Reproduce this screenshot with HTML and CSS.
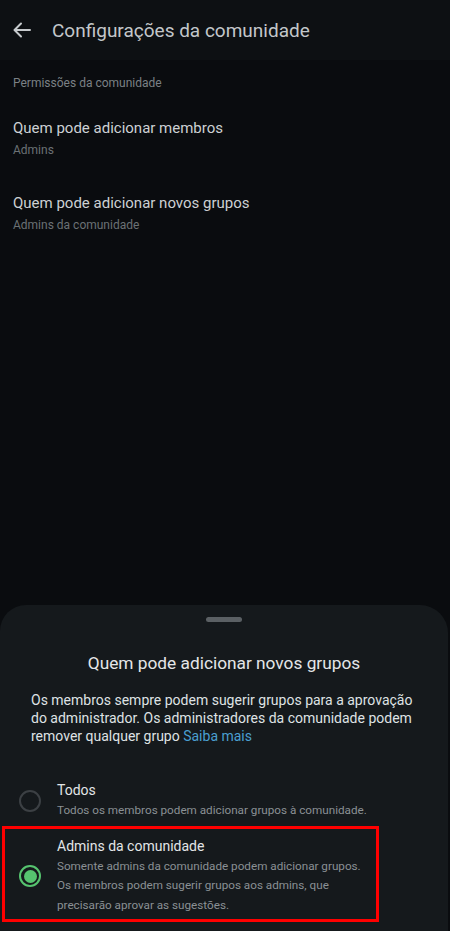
FILE: index.html
```html
<!DOCTYPE html>
<html lang="pt">
<head>
    <meta charset="UTF-8">
    <meta name="viewport" content="width=device-width, initial-scale=1.0">
    <title>Configurações da comunidade</title>
    <link rel="stylesheet" href="styles.css">
</head>
<body>
    <div class="top">
        <svg class="back" width="18" height="16" viewBox="0 0 18 16">
            <path d="M17 8H2M8 1.5L1.5 8L8 14.5" fill="none" stroke="#c6cacd" stroke-width="2" stroke-linecap="round" stroke-linejoin="round"/>
        </svg>
        <span class="top-title">Configurações da comunidade</span>
    </div>

    <div class="settings">
        <div class="section">Permissões da comunidade</div>
        <div class="item">
            <div class="item-title">Quem pode adicionar membros</div>
            <div class="item-sub">Admins</div>
        </div>
        <div class="item">
            <div class="item-title">Quem pode adicionar novos grupos</div>
            <div class="item-sub">Admins da comunidade</div>
        </div>
    </div>

    <div class="sheet">
        <div class="handle"></div>
        <div class="sheet-title">Quem pode adicionar novos grupos</div>
        <p class="sheet-text">Os membros sempre podem sugerir grupos para a aprovação do administrador. Os administradores da comunidade podem remover qualquer grupo <span class="link">Saiba mais</span></p>

        <div class="options">
            <div class="option">
                <span class="radio"></span>
                <div class="option-body">
                    <div class="option-title">Todos</div>
                    <div class="option-desc">Todos os membros podem adicionar grupos à comunidade.</div>
                </div>
            </div>
            <div class="option marked">
                <span class="radio on"></span>
                <div class="option-body">
                    <div class="option-title">Admins da comunidade</div>
                    <div class="option-desc">Somente admins da comunidade podem adicionar grupos. Os membros podem sugerir grupos aos admins, que precisarão aprovar as sugestões.</div>
                </div>
            </div>
        </div>
    </div>
</body>
</html>
```

FILE: styles.css
```css
*, *::after, *::before {
    box-sizing: border-box;
    margin: 0;
    padding: 0;
}
html, body {
    width: 100%;
    height: 100%;
}
body {
    background-color: #0a0c0f;
    font-family: Roboto, "Noto Sans", sans-serif;
    display: flex;
    flex-direction: column;
    overflow: hidden;
}
.top {
    height: 60px;
    background-color: #0d1013;
    display: flex;
    align-items: center;
    padding-left: 13px;
    gap: 21px;
}
.back {
    flex: none;
}
.top-title {
    font-size: 19px;
    color: #c3c7ca;
}
.settings {
    padding: 15px 13px 0;
}
.section {
    font-size: 12px;
    line-height: 16px;
    color: #7b8185;
}
.item {
    margin-top: 27px;
}
.item + .item {
    margin-top: 35px;
}
.item-title {
    font-size: 15px;
    line-height: 20px;
    color: #cdd1d4;
}
.item-sub {
    margin-top: 4px;
    font-size: 12px;
    line-height: 16px;
    color: #6b7175;
}
.sheet {
    margin-top: auto;
    width: 448px;
    background-color: #15191c;
    border-radius: 26px 28px 0 0;
    padding: 12px 0 9px;
}
.handle {
    width: 36px;
    height: 5px;
    border-radius: 3px;
    background-color: #5b6064;
    margin: 0 auto;
}
.sheet-title {
    margin-top: 29px;
    text-align: center;
    font-size: 17.3px;
    line-height: 24px;
    color: #e4e6e8;
}
.sheet-text {
    margin-top: 16px;
    padding: 0 34px 0 31px;
    font-size: 14px;
    line-height: 18px;
    color: #dfe2e4;
}
.link {
    color: #4a9fd0;
}
.options {
    margin: 26px 0 0 2px;
    width: 377px;
}
.option {
    display: flex;
    align-items: center;
    gap: 16px;
    padding: 10px 0 5px 17px;
}
.option.marked {
    border: 3px solid #ff0000;
    padding: 8px 0 4px 14px;
}
.option-body {
    padding-right: 8px;
}
.radio {
    flex: none;
    width: 22px;
    height: 22px;
    border-radius: 50%;
    border: 2px solid #3c4044;
}
.radio.on {
    border: 2.5px solid #56c46f;
    padding: 2.5px;
    background-color: #56c46f;
    background-clip: content-box;
}
.option-title {
    font-size: 14px;
    line-height: 18px;
    color: #e2e5e7;
}
.option-desc {
    margin-top: 2px;
    font-size: 11.7px;
    line-height: 19.5px;
    color: #8a9094;
}
```
